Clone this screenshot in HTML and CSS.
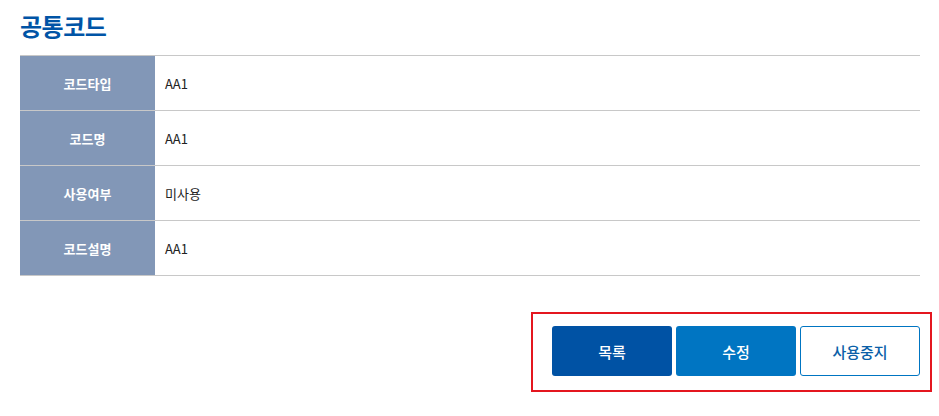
FILE: index.html
```html
<!DOCTYPE html>
<html lang="ko">
<head>
<meta charset="utf-8">
<link rel="stylesheet" href="styles.css">
</head>
<body>
<div class="page">
  <h2 class="title">공통코드</h2>
  <table class="info">
    <tr><th>코드타입</th><td>AA1</td></tr>
    <tr><th>코드명</th><td>AA1</td></tr>
    <tr><th>사용여부</th><td>미사용</td></tr>
    <tr><th>코드설명</th><td>AA1</td></tr>
  </table>
  <div class="actions-row">
    <div class="actions">
      <button class="btn btn-list">목록</button>
      <button class="btn btn-edit">수정</button>
      <button class="btn btn-stop">사용중지</button>
    </div>
  </div>
</div>
</body>
</html>
```

FILE: styles.css
```css
* { box-sizing: border-box; }
body {
  margin: 0;
  font-family: "Noto Sans CJK KR", "Noto Sans", sans-serif;
  background: #fff;
}
.page {
  padding: 0 19px 0 20px;
}
.title {
  margin: 0;
  height: 55px;
  padding-top: 8px;
  font-size: 24px;
  font-weight: 700;
  line-height: 36px;
  color: #0054a6;
  letter-spacing: -0.5px;
}
.info {
  width: 900px;
  border-collapse: collapse;
  border-top: 1px solid #c8c8c8;
}
.info tr {
  height: 55px;
  border-bottom: 1px solid #c8c8c8;
}
.info th {
  width: 135px;
  padding: 0;
  background: #8297b7;
  color: #fff;
  font-size: 13px;
  font-weight: 700;
  text-align: center;
}
.info td {
  padding: 0 10px;
  font-size: 13px;
  color: #222;
}
.actions-row {
  display: flex;
  justify-content: flex-end;
  padding-top: 36px;
  margin-right: -12px;
}
.actions {
  display: flex;
  gap: 4px;
  border: 2px solid #e4161f;
  padding: 12px 10px 14px 19px;
}
.btn {
  width: 120px;
  height: 50px;
  border-radius: 3px;
  font-family: inherit;
  font-size: 15px;
  font-weight: 500;
  border: 1px solid transparent;
  cursor: pointer;
}
.btn-list { background: #0052a4; color: #fff; }
.btn-edit { background: #0075c2; color: #fff; }
.btn-stop { background: #fff; color: #0a5fa8; border-color: #0075c2; }
```
